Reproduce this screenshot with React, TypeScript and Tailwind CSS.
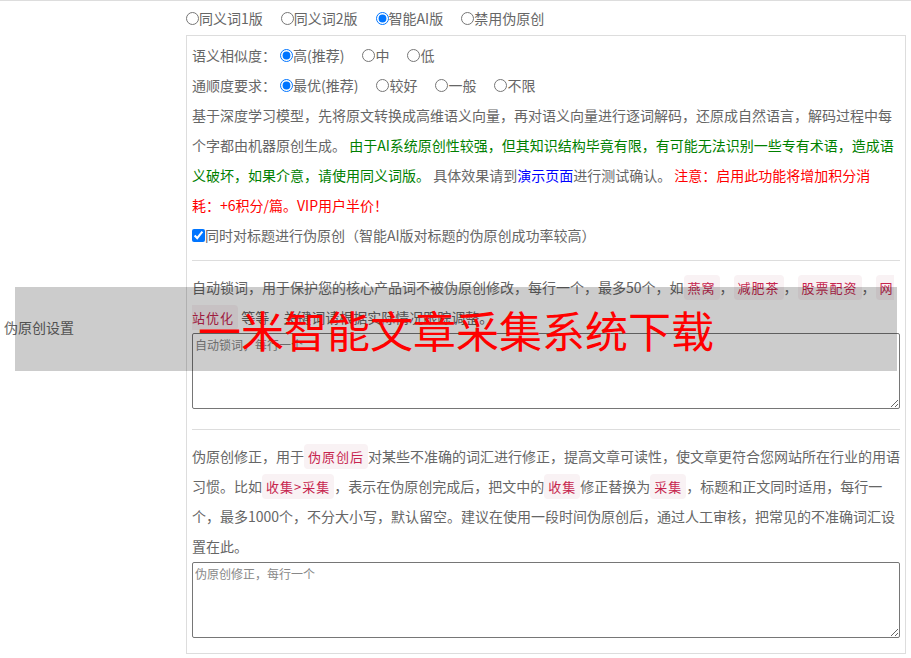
import React from 'react';

const font = { fontFamily: '"Noto Sans CJK SC", "Noto Sans", sans-serif' };

const Tag: React.FC<{ children: React.ReactNode }> = ({ children }) => (
    <code className="bg-[#f9f2f4] text-[#c7254e] px-[4px] py-[3px] rounded-[4px] text-[13px] leading-none tracking-[1px] font-[inherit]">
        {children}
    </code>
);

const Radio: React.FC<{ name: string; label: string; checked?: boolean }> = ({ name, label, checked }) => (
    <label className="inline-flex items-center mr-[18px]">
        <input type="radio" name={name} defaultChecked={checked} className="w-[13px] h-[13px]" />
        <span>{label}</span>
    </label>
);

export default function App() {
    return (
        <div className="relative w-[911px] h-[658px] overflow-hidden bg-white text-[14px] text-[#666]" style={font}>
            <div className="flex border-t border-[#ddd]">
                <div className="w-[186px] shrink-0 flex items-center pl-[4px]">伪原创设置</div>
                <div className="flex-1 pr-[5px]">
                    <div className="h-[34px] flex items-center">
                        <Radio name="mode" label="同义词1版" />
                        <Radio name="mode" label="同义词2版" />
                        <Radio name="mode" label="智能AI版" checked />
                        <Radio name="mode" label="禁用伪原创" />
                    </div>
                    <div className="border border-[#ddd] px-[5px] pt-[4px] pb-[15px]">
                        <div className="pb-[10px] border-b border-[#ddd]">
                            <div className="h-[30px] flex items-center">
                                <span className="mr-[4px]">语义相似度：</span>
                                <Radio name="sim" label="高(推荐)" checked />
                                <Radio name="sim" label="中" />
                                <Radio name="sim" label="低" />
                            </div>
                            <div className="h-[30px] flex items-center">
                                <span className="mr-[4px]">通顺度要求：</span>
                                <Radio name="flu" label="最优(推荐)" checked />
                                <Radio name="flu" label="较好" />
                                <Radio name="flu" label="一般" />
                                <Radio name="flu" label="不限" />
                            </div>
                            <p className="leading-[30px] pr-[4px]">
                                基于深度学习模型，先将原文转换成高维语义向量，再对语义向量进行逐词解码，还原成自然语言，解码过程中每个字都由机器原创生成。{' '}
                                <span className="text-[#008000]">由于AI系统原创性较强，但其知识结构毕竟有限，有可能无法识别一些专有术语，造成语义破坏，如果介意，请使用同义词版。</span>{' '}
                                具体效果请到<a href="#" className="text-[#0000ff]">演示页面</a>进行测试确认。{' '}
                                <span className="text-[#ff0000]">注意：启用此功能将增加积分消耗：+6积分/篇。VIP用户半价！</span>
                            </p>
                            <label className="h-[30px] flex items-center">
                                <input type="checkbox" defaultChecked className="w-[13px] h-[13px]" />
                                <span>同时对标题进行伪原创（智能AI版对标题的伪原创成功率较高）</span>
                            </label>
                        </div>

                        <div className="pt-[11px] pb-[20px] border-b border-[#ddd]">
                            <p className="leading-[30px]">
                                自动锁词，用于保护您的核心产品词不被伪原创修改，每行一个，最多50个，如<Tag>燕窝</Tag>，<Tag>减肥茶</Tag>，<Tag>股票配资</Tag>，<Tag>网站优化</Tag> 等等，关键词请根据实际情况跟踪调整。
                            </p>
                            <textarea
                                placeholder="自动锁词，每行一个"
                                className="block mt-[1px] w-full h-[76px] border border-[#767676] rounded-[2px] px-[2px] py-[2px] text-[12px] placeholder:text-[#888]"
                            />
                        </div>

                        <div className="pt-[11px]">
                            <p className="leading-[30px]">
                                伪原创修正，用于<Tag>伪原创后</Tag>对某些不准确的词汇进行修正，提高文章可读性，使文章更符合您网站所在行业的用语习惯。比如<Tag>收集&gt;采集</Tag>，表示在伪原创完成后，把文中的<Tag>收集</Tag>修正替换为<Tag>采集</Tag>，标题和正文同时适用，每行一个，最多1000个，不分大小写，默认留空。建议在使用一段时间伪原创后，通过人工审核，把常见的不准确词汇设置在此。
                            </p>
                            <textarea
                                placeholder="伪原创修正，每行一个"
                                className="block mt-[1px] w-full h-[76px] border border-[#767676] rounded-[2px] px-[2px] py-[2px] text-[12px] placeholder:text-[#888]"
                            />
                        </div>
                    </div>
                </div>
            </div>

            <div className="absolute left-[15px] top-[287px] w-[882px] h-[84px] bg-black/20 flex items-center justify-center">
                <span className="text-[#ff0000] text-[43px] leading-none">一米智能文章采集系统下载</span>
            </div>
        </div>
    );
}
